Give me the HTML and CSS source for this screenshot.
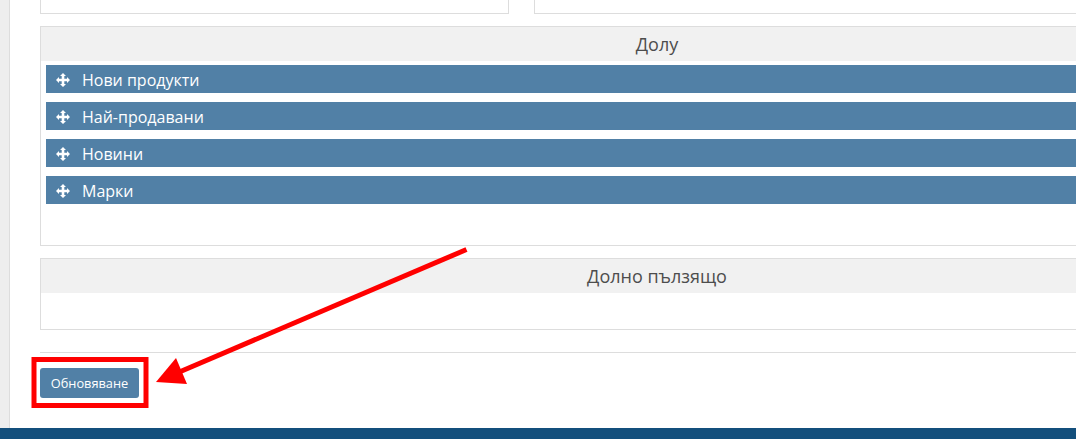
FILE: index.html
```html
<!DOCTYPE html>
<html lang="bg">
<head>
<meta charset="utf-8">
<title>Обновяване</title>
<link rel="stylesheet" href="styles.css">
</head>
<body>
<div class="page">
  <main class="content">
    <div class="columns">
      <div class="stub"></div>
      <div class="stub"></div>
    </div>
    <section class="panel panel-bottom">
      <h3 class="panel-title">Долу</h3>
      <ul class="modules">
        <li class="module"><svg class="move" viewBox="0 0 14 14"><path d="M7 0 10 3H8.300V5.700H11V4L14 7 11 10V8.300H8.300V11H10L7 14 4 11H5.700V8.300H3V10L0 7 3 4V5.700H5.700V3H4Z"/></svg>Нови продукти</li>
        <li class="module"><svg class="move" viewBox="0 0 14 14"><path d="M7 0 10 3H8.300V5.700H11V4L14 7 11 10V8.300H8.300V11H10L7 14 4 11H5.700V8.300H3V10L0 7 3 4V5.700H5.700V3H4Z"/></svg>Най-продавани</li>
        <li class="module"><svg class="move" viewBox="0 0 14 14"><path d="M7 0 10 3H8.300V5.700H11V4L14 7 11 10V8.300H8.300V11H10L7 14 4 11H5.700V8.300H3V10L0 7 3 4V5.700H5.700V3H4Z"/></svg>Новини</li>
        <li class="module"><svg class="move" viewBox="0 0 14 14"><path d="M7 0 10 3H8.300V5.700H11V4L14 7 11 10V8.300H8.300V11H10L7 14 4 11H5.700V8.300H3V10L0 7 3 4V5.700H5.700V3H4Z"/></svg>Марки</li>
      </ul>
    </section>
    <section class="panel panel-slider">
      <h3 class="panel-title">Долно пълзящо</h3>
    </section>
    <div class="actions">
      <button class="btn" type="button">Обновяване</button>
    </div>
  </main>
  <footer class="footer"></footer>
</div>
<svg class="annotation" viewBox="0 0 1076 439" width="1076" height="439">
  <rect x="34" y="359.500" width="112" height="46" fill="none" stroke="#ff0000" stroke-width="5"/>
  <path d="M466.500 249.500 180.500 371.500" stroke="#ff0000" stroke-width="5" fill="none"/>
  <path d="M156 382 176 358 187 384Z" fill="#ff0000"/>
</svg>
</body>
</html>
```
FILE: styles.css
```css
* { box-sizing: border-box; }
html, body { margin: 0; height: 439px; overflow: hidden; background: #fff; }
body { font-family: "Open Sans", sans-serif; color: #4d4d4d; position: relative; }
.page { width: 1076px; height: 439px; display: flex; flex-direction: column; overflow: hidden; background: #eee; }
.content {
  flex: 0 0 428px; margin-left: 9px; padding: 0 0 0 30px; background: #fff;
  border-left: 1px solid #ddd; width: 1300px;
}
.columns { display: grid; grid-template-columns: 469px 1fr; gap: 25px; height: 14px; width: 1234px; }
.stub { border: 1px solid #ddd; border-top: 0; }
.panel { width: 1234px; border: 1px solid #ddd; }
.panel-bottom { margin-top: 12px; height: 220px; }
.panel-slider { margin-top: 12px; height: 72px; }
.panel-title {
  margin: 0; height: 34px; background: #f1f1f1; font-weight: 400; font-size: 18px;
  line-height: 35px; text-align: center; color: #4d4d4d;
}
.modules { list-style: none; margin: 0; padding: 4px 5px 0; display: flex; flex-direction: column; gap: 9px; }
.module {
  height: 28px; background: #5180a6; color: #fff; font-size: 16px; line-height: 26px;
  display: flex; align-items: center; padding: 2px 0 0 10px;
}
.move { width: 14px; height: 14px; fill: #fff; margin-right: 12px; }
.actions { margin-top: 22px; width: 1234px; border-top: 1px solid #ddd; padding-top: 15px; }
.btn {
  display: block; width: 99px; height: 30px; padding: 0; border: 0; border-radius: 3px;
  background: #5180a6; color: #fff; font: 400 12.800px "Open Sans", sans-serif;
}
.footer { flex: 0 0 11px; background: #134f7c; }
.annotation { position: absolute; left: 0; top: 0; pointer-events: none; }
```
